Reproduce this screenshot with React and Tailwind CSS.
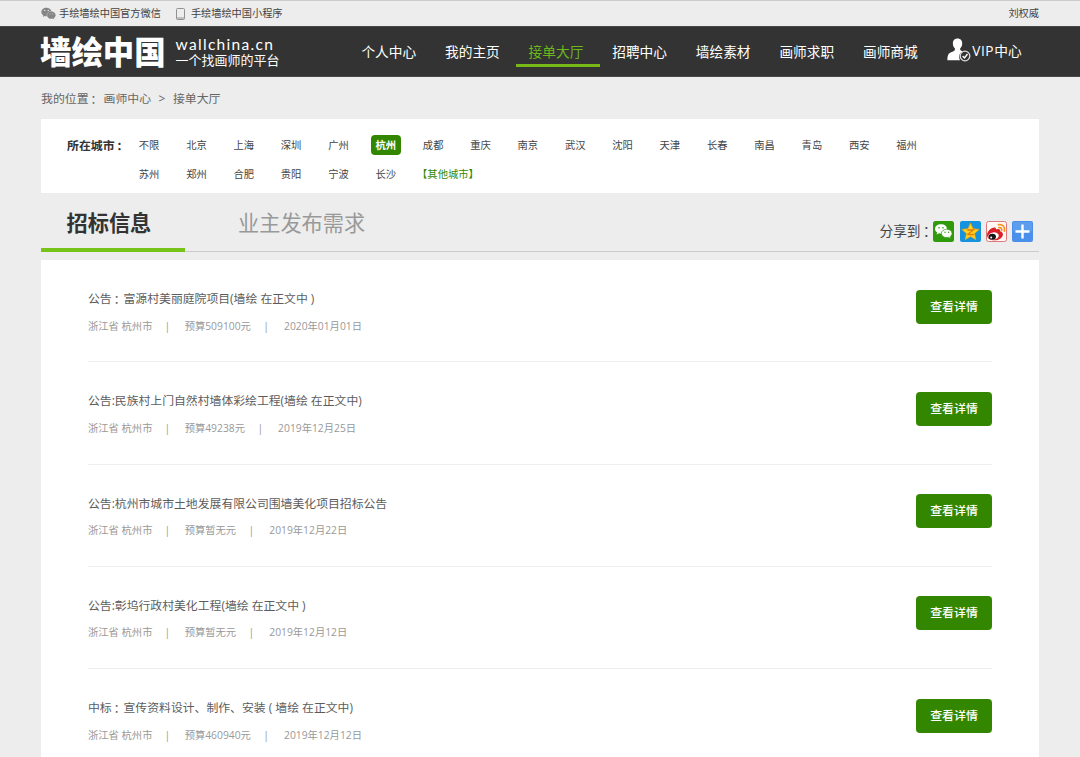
import { FaWeixin } from 'react-icons/fa'

const NAV = ['个人中心', '我的主页', '接单大厅', '招聘中心', '墙绘素材', '画师求职', '画师商城']

const CITIES = [
  '不限', '北京', '上海', '深圳', '广州', '杭州', '成都', '重庆', '南京', '武汉', '沈阳', '天津', '长春', '南昌', '青岛', '西安', '福州',
  '苏州', '郑州', '合肥', '贵阳', '宁波', '长沙',
]

const PROJECTS = [
  { title: '公告：富源村美丽庭院项目(墙绘 在正文中 )', budget: '预算509100元', date: '2020年01月01日' },
  { title: '公告:民族村上门自然村墙体彩绘工程(墙绘 在正文中)', budget: '预算49238元', date: '2019年12月25日' },
  { title: '公告:杭州市城市土地发展有限公司围墙美化项目招标公告', budget: '预算暂无元', date: '2019年12月22日' },
  { title: '公告:彰坞行政村美化工程(墙绘 在正文中 )', budget: '预算暂无元', date: '2019年12月12日' },
  { title: '中标：宣传资料设计、制作、安装 ( 墙绘 在正文中)', budget: '预算460940元', date: '2019年12月12日' },
]

// full-width colon, centred in its cell and dropped to the baseline
function Colon() {
  return <span className="inline-block leading-none translate-y-px -translate-x-px font-['Noto_Sans_CJK_TC',sans-serif]">：</span>
}

function Title({ text }) {
  const [head, tail] = text.split('：')
  if (!tail) return text
  return <>{head}<Colon />{tail}</>
}

function VipIcon() {
  return (
    <svg className="w-6 h-6 shrink-0" viewBox="0 0 24 24">
      <path fill="#fff" d="M10.500 0.600c3 0 4.900 2.100 4.700 5.100-.1 1.900-.9 3.600-2 4.600v1.700c.6.7 1.600 1 2.600 1.300-2.200 1-3.700 3-3.700 5.400 0 1.300.3 2.500.9 3.500H.4c0-4.300.7-6.500 3.200-7.700 1.600-.8 3.700-1.100 4.300-2.500v-1.700c-1.200-1-1.900-2.700-2-4.600C5.700 2.700 7.500.6 10.500.6z" />
      <circle cx="18" cy="18" r="4.800" fill="#333" stroke="#ddd" strokeWidth="1.300" />
      <path d="M15.600 18l1.900 2 3-4" fill="none" stroke="#fff" strokeWidth="1.400" />
    </svg>
  )
}

function WechatShare() {
  return (
    <svg className="w-[21px] h-[21px]" viewBox="0 0 21 21">
      <rect width="21" height="21" rx="2.500" fill="#2e9a0c" />
      <path fill="#fff" d="M8 3.200c3.400 0 6 2.100 6 4.700s-2.600 4.700-6 4.700c-.7 0-1.400-.1-2-.3L3.600 13.600l.6-2.200C2.800 10.500 2 9.300 2 7.900c0-2.600 2.600-4.700 6-4.700z" />
      <path fill="#fff" stroke="#2e9a0c" strokeWidth=".7" d="M13.700 8.200c3 0 5.300 1.900 5.300 4.200 0 1.300-.7 2.400-1.800 3.200l.5 1.900-2.200-1.100c-.6.2-1.200.2-1.800.2-3 0-5.300-1.900-5.300-4.200s2.300-4.200 5.300-4.200z" />
      <g fill="#2e9a0c">
        <circle cx="6" cy="6.700" r=".8" />
        <circle cx="10" cy="6.700" r=".8" />
        <circle cx="12" cy="11.300" r=".7" />
        <circle cx="15.600" cy="11.300" r=".7" />
      </g>
    </svg>
  )
}

function QzoneShare() {
  return (
    <svg className="w-[21px] h-[21px]" viewBox="0 0 21 21">
      <rect width="21" height="21" rx="2" fill="#1593df" />
      <path fill="#ffd01c" stroke="#f59a12" strokeWidth=".6" strokeLinejoin="round" d="M10.500 2l2.600 5.700 6.100.7-4.600 4.100 1.300 6.200-5.400-3.100-5.400 3.100 1.300-6.200-4.600-4.100 6.100-.7z" />
      <path fill="none" stroke="#e87608" strokeWidth="1.300" d="M7.300 9h6l-5.300 4.300c2 .4 4 .4 6 0" />
    </svg>
  )
}

function WeiboShare() {
  return (
    <svg className="w-[21px] h-[21px]" viewBox="0 0 21 21">
      <rect x=".5" y=".5" width="20" height="20" rx="2" fill="#fff8f5" stroke="#e0777b" />
      <path fill="#dc1f29" d="M6.300 7c1.600-.7 3.900-.9 3.800 1.400 2.100-.8 4.600-.4 4 1.800 1.800.6 3 1.800 2.800 3.500-.3 2.900-3.800 5.600-8.400 5.600C4.400 19.300 1 17.200 1 14.200 1 11.300 3.400 8.200 6.300 7z" />
      <ellipse cx="7.500" cy="15" rx="5.300" ry="3.600" fill="#fff" transform="rotate(-8 7.500 15)" />
      <ellipse cx="6.300" cy="15.800" rx="3.700" ry="3" fill="#151515" />
      <circle cx="5.200" cy="16.600" r="1" fill="#fff" />
      <path fill="none" stroke="#f6941d" strokeWidth="1.700" strokeLinecap="round" d="M12.500 3.700c4-.9 7 2.300 5.900 6.400M12.900 6.600c1.900-.4 3.200 1 2.700 2.900" />
    </svg>
  )
}

function MoreShare() {
  return (
    <svg className="w-[21px] h-[21px]" viewBox="0 0 21 21">
      <rect width="21" height="21" rx="2" fill="#4a90ea" />
      <rect x="1" y="1" width="19" height="9.500" rx="1" fill="#5c9dee" />
      <path stroke="#fff" strokeWidth="2.400" d="M10.500 3.500v14M3.500 10.500h14" />
    </svg>
  )
}

function TopBar() {
  return (
    <div className="h-[26px] border-t border-[#ccc] px-[41px] pt-px flex items-center justify-between text-[10.2px] text-[#444]">
      <div className="flex items-center">
        <FaWeixin className="size-[15px] text-[#858585]" />
        <span className="ml-[3px]">手绘墙绘中国官方微信</span>
        <svg className="ml-[15px] w-[9px] h-3" viewBox="0 0 9 12">
          <rect x=".5" y=".5" width="8" height="11" rx="1" fill="none" stroke="#909090" />
          <path stroke="#909090" d="M1 10h7" />
        </svg>
        <span className="ml-[6px]">手绘墙绘中国小程序</span>
      </div>
      <span>刘权威</span>
    </div>
  )
}

function Header() {
  return (
    <header className="h-[51px] bg-[#333] border-y border-[#484848] pl-[40px] flex items-start text-white">
      <div className="w-[309px] h-[49px] flex items-center">
        <div className="text-[31.4px] leading-none font-black">墙绘中国</div>
        <div className="ml-[10px] pt-[2px] flex flex-col">
          <span className="text-[15.5px] leading-[15px] font-['Lato','DejaVu_Sans',sans-serif] tracking-[1.3px]">wallchina.cn</span>
          <span className="text-[13px] leading-[16px]">一个找画师的平台</span>
        </div>
      </div>
      <nav className="flex text-[13.7px]">
        {NAV.map((item) => (
          <a
            key={item}
            className={`w-[83.6px] h-10 flex items-center justify-center pt-[13px] pr-1 border-b-[3px] ${item === '接单大厅' ? 'text-[#6cb81c] border-[#77b817]' : 'border-transparent'}`}
          >
            {item}
          </a>
        ))}
      </nav>
      <a className="mt-[11px] ml-[13px] flex items-center text-[13.7px]">
        <VipIcon />
        <span className="ml-px mt-[3px]"><span className="tracking-[0.6px]">VIP</span>中心</span>
      </a>
    </header>
  )
}

function CityFilter() {
  return (
    <section className="h-[74px] bg-white flex pt-[13px] pl-[26px]">
      <div className="w-[67px] shrink-0 text-[11.9px] leading-[27px] font-bold text-[#333]">
        所在城市<Colon />
      </div>
      <div className="grid grid-cols-[repeat(17,47.35px)] auto-rows-[28.500px] items-center -mt-px text-[10.3px] text-[#444]">
        {CITIES.map((city) => (
          <div key={city}>
            <a className={`inline-block px-[4.8px] leading-[20px] rounded-[4px] ${city === '杭州' ? 'bg-[#338700] text-white font-bold' : ''}`}>
              {city}
            </a>
          </div>
        ))}
        <a className="text-[#338700] whitespace-nowrap -ml-px pt-px">【其他城市】</a>
      </div>
    </section>
  )
}

function Tabs() {
  return (
    <div className="h-[59px] border-b border-[#ccc] flex text-[21.200px]">
      <div className="w-36 h-[59px] shrink-0 border-b-[4px] border-[#77c31a] pl-[25.5px] leading-[60px] font-bold text-[#333]">
        招标信息
      </div>
      <div className="ml-[53px] leading-[60px] text-[#999]">业主发布需求</div>
      <div className="ml-auto mr-[6px] pt-[19px] flex items-center gap-[5.200px]">
        <span className="-mr-[6px] text-[13.7px] text-[#444]">分享到<Colon /></span>
        <WechatShare />
        <QzoneShare />
        <WeiboShare />
        <MoreShare />
      </div>
    </div>
  )
}

function ProjectRow({ project }) {
  return (
    <li className="h-[102.3px] border-b border-[#eee] flex justify-between">
      <div className="pt-[28px]">
        <h3 className="text-[11.85px] leading-[20px] text-[#5c5c5c]"><Title text={project.title} /></h3>
        <div className="mt-[7.5px] flex text-[10.3px] leading-[20px] text-[#999]">
          <span>浙江省 杭州市</span>
          <span className="ml-[12px] mr-[14.5px]">|</span>
          <span>{project.budget}</span>
          <span className="ml-[12.5px] mr-[15px]">|</span>
          <span>{project.date}</span>
        </div>
      </div>
      <button className="mt-[29.5px] w-[76px] h-[34px] rounded-[4px] bg-[#338700] text-[11.9px] font-medium text-white">
        查看详情
      </button>
    </li>
  )
}

export default function App() {
  return (
    <div className="w-[1080px] h-[757px] overflow-hidden bg-[#ededed] font-['Open_Sans','Noto_Sans_CJK_SC',sans-serif]">
      <TopBar />
      <Header />
      <main className="w-[998px] ml-[41px]">
        <div className="h-[42px] leading-[42px] text-[11.9px] text-[#666] flex">
          <span>我的位置<Colon /></span>
          <span className="ml-[3px]">画师中心</span>
          <span className="mx-[7.5px]">&gt;</span>
          <span>接单大厅</span>
        </div>
        <CityFilter />
        <Tabs />
        <ul className="mt-[8px] bg-white px-[47px]">
          {PROJECTS.map((project) => (
            <ProjectRow key={project.title} project={project} />
          ))}
        </ul>
      </main>
    </div>
  )
}
